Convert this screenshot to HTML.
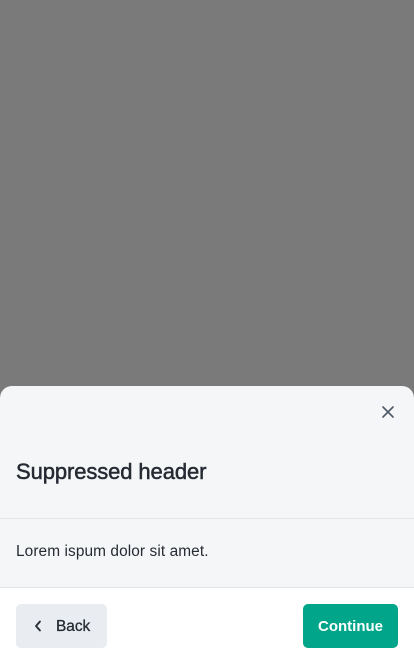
<!DOCTYPE html>
<html><head><meta charset="utf-8"><style>
*{margin:0;padding:0;box-sizing:border-box}
html,body{width:414px;height:664px;overflow:hidden;background:#7a7a7a;font-family:"Liberation Sans",sans-serif}
.sheet{position:absolute;left:0;top:386px;width:414px;height:278px;background:#f5f6f8;border-radius:12px 12px 0 0;overflow:hidden}
.close{position:absolute;left:381px;top:19px;width:14px;height:14px}
h1{position:absolute;left:16px;top:73px;font-size:22px;font-weight:normal;color:#262b33;letter-spacing:-0.1px;-webkit-text-stroke:0.5px #262b33}
.d1{position:absolute;left:0;top:132px;width:414px;height:1px;background:#e2e4e8}
.body{position:absolute;left:16px;top:157px;font-size:15.4px;letter-spacing:0.1px;color:#262b33}
.foot{position:absolute;left:0;top:201px;width:414px;height:77px;background:#fff;border-top:1px solid #e2e4e8}
.back{position:absolute;left:16px;top:16px;width:91px;height:44px;background:#e9edf1;border-radius:5px;font-size:15px;color:#262b33}
.back span{position:absolute;left:40px;top:14px;font-size:15.4px;-webkit-text-stroke:0.3px #262b33}
.back svg{position:absolute;left:18px;top:16px}
.cont{position:absolute;left:303px;top:16px;width:95px;height:44px;background:#00a58a;border-radius:5px;color:#fff;font-size:15px;font-weight:bold;text-align:center;line-height:45px}
</style></head><body>
<div class="sheet">
<svg class="close" viewBox="0 0 14 14"><path d="M2 2L12 12M12 2L2 12" stroke="#4f5866" stroke-width="1.6" stroke-linecap="round"/></svg>
<h1>Suppressed header</h1>
<div class="d1"></div>
<div class="body">Lorem ispum dolor sit amet.</div>
<div class="foot">
<div class="back"><svg width="8" height="12" viewBox="0 0 8 12"><path d="M6 1.5L2 6l4 4.5" fill="none" stroke="#262b33" stroke-width="1.8" stroke-linecap="round" stroke-linejoin="round"/></svg><span>Back</span></div>
<div class="cont">Continue</div>
</div>
</div>
</body></html>
